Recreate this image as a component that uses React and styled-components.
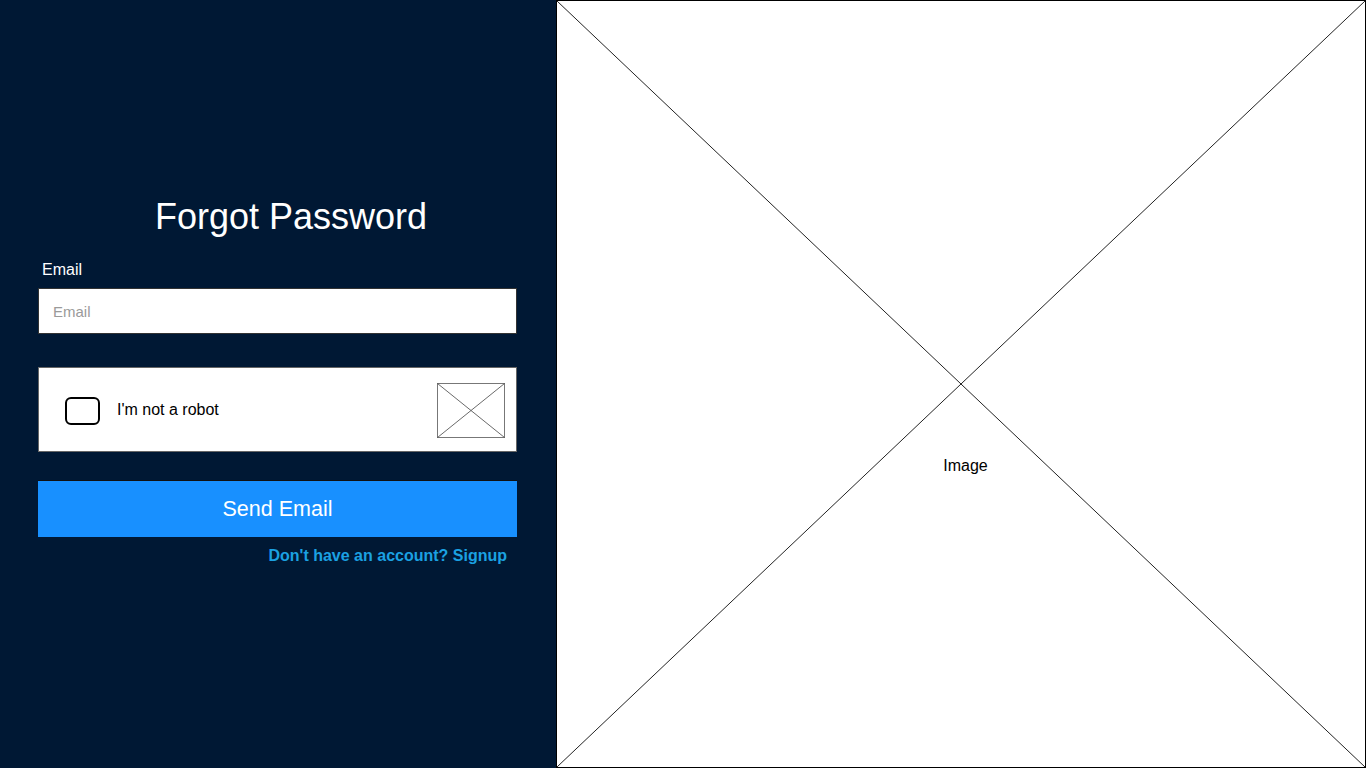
import React from 'react'
import styled, { createGlobalStyle } from 'styled-components'

const GlobalStyle = createGlobalStyle`
  html, body {
    margin: 0;
    padding: 0;
    overflow: hidden;
  }
  body {
    font-family: "Liberation Sans", Arial, sans-serif;
  }
`;

const Page = styled.div`
  display: grid;
  grid-template-columns: 556px 1fr;
  height: 100vh;
`;

const FormSide = styled.div`
  background: #001834;
  padding: 197px 39px 0 38px;
`;

const Title = styled.h1`
  margin: 0 0 24px;
  padding-left: 27px;
  text-align: center;
  font-size: 36px;
  line-height: 40px;
  font-weight: 400;
  color: #fff;
`;

const Label = styled.label`
  display: block;
  margin: 0 0 9px 4px;
  font-size: 16px;
  line-height: 18px;
  color: #fff;
`;

const Input = styled.input`
  display: block;
  box-sizing: border-box;
  width: 100%;
  height: 46px;
  margin: 0 0 33px;
  padding: 0 14px;
  border: 1px solid #333;
  background: #fff;
  font-family: inherit;
  font-size: 15px;
  color: #222;
  outline: none;
  &::placeholder {
    color: #9a9a9a;
  }
`;

const Captcha = styled.div`
  box-sizing: border-box;
  display: flex;
  align-items: center;
  height: 85px;
  margin-bottom: 28px;
  padding: 0 11px 0 26px;
  border: 1px solid #666;
  background: #fff;
`;

const CheckBox = styled.span`
  box-sizing: border-box;
  width: 35px;
  height: 28px;
  margin-top: 2px;
  border: 2.5px solid #000;
  border-radius: 6px;
`;

const CaptchaText = styled.span`
  flex: 1;
  margin-left: 17px;
  font-size: 16px;
  color: #000;
`;

const Placeholder = styled.svg`
  display: block;
  width: 68px;
  height: 55px;
  margin-top: 2px;
`;

const SendButton = styled.button`
  display: block;
  width: 100%;
  height: 57px;
  margin: 0 0 10px;
  border: none;
  border-top: 1px solid #111;
  background: #1890ff;
  color: #fff;
  font-family: inherit;
  font-size: 21.5px;
  cursor: pointer;
`;

const SignupLink = styled.a`
  display: block;
  padding-right: 10px;
  text-align: right;
  font-size: 16px;
  line-height: 18px;
  font-weight: 700;
  color: #1ba1e2;
  text-decoration: none;
`;

const ImageSide = styled.div`
  position: relative;
  box-sizing: border-box;
  border: 1px solid #000;
  background: #fff;
  padding: 456px 0 0 9px;
  text-align: center;
`;

const Cross = styled.svg`
  position: absolute;
  inset: 0;
  width: 100%;
  height: 100%;
`;

const ImageLabel = styled.span`
  position: relative;
  font-size: 16px;
  line-height: 18px;
  color: #000;
`;

export default function App() {
  return (
    <>
      <GlobalStyle />
      <Page>
        <FormSide>
          <Title>Forgot Password</Title>
          <Label htmlFor="email">Email</Label>
          <Input id="email" type="email" placeholder="Email" />
          <Captcha>
            <CheckBox />
            <CaptchaText>I'm not a robot</CaptchaText>
            <Placeholder viewBox="0 0 68 55">
              <rect x="0.5" y="0.5" width="67" height="54" fill="#fff" stroke="#777" />
              <line x1="0.5" y1="0.5" x2="67.5" y2="54.5" stroke="#444" strokeWidth="0.8" />
              <line x1="67.5" y1="0.5" x2="0.5" y2="54.5" stroke="#444" strokeWidth="0.8" />
            </Placeholder>
          </Captcha>
          <SendButton type="button">Send Email</SendButton>
          <SignupLink href="#">Don't have an account? Signup</SignupLink>
        </FormSide>
        <ImageSide>
          <Cross viewBox="0 0 810 768" preserveAspectRatio="none">
            <line x1="0" y1="0" x2="810" y2="768" stroke="#222" strokeWidth="1" />
            <line x1="810" y1="0" x2="0" y2="768" stroke="#222" strokeWidth="1" />
          </Cross>
          <ImageLabel>Image</ImageLabel>
        </ImageSide>
      </Page>
    </>
  )
}
